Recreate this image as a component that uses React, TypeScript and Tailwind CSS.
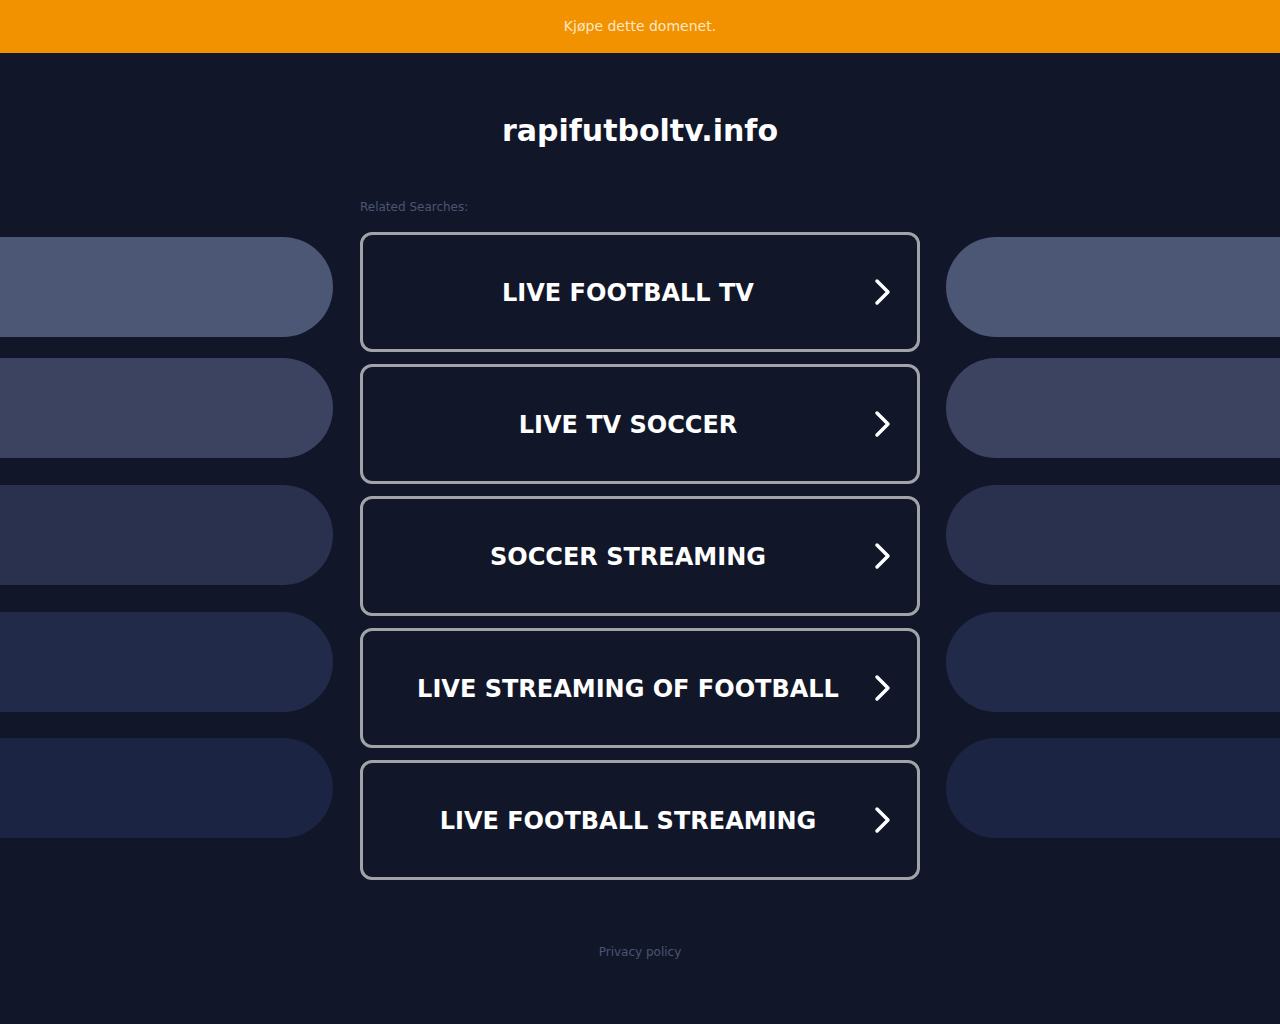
const searches = [
  "LIVE FOOTBALL TV",
  "LIVE TV SOCCER",
  "SOCCER STREAMING",
  "LIVE STREAMING OF FOOTBALL",
  "LIVE FOOTBALL STREAMING",
];

// decorative pills on both sides, lighter at the top
const pills = [
  { color: "bg-[#4c5675]", gap: "mt-0" },
  { color: "bg-[#3b4361]", gap: "mt-[21px]" },
  { color: "bg-[#29314f]", gap: "mt-[27px]" },
  { color: "bg-[#222a4a]", gap: "mt-[27px]" },
  { color: "bg-[#1c2444]", gap: "mt-[26px]" },
];

function Chevron() {
  return (
    <svg width="24" height="28" viewBox="0 0 24 28" fill="none" className="shrink-0">
      <path d="M8 3 L19 14 L8 25" stroke="white" strokeWidth="3.5" strokeLinecap="round" strokeLinejoin="round" />
    </svg>
  );
}

function Pills({ side }: { side: "left" | "right" }) {
  return (
    <div className={`flex flex-col pt-[41px] ${side === "right" ? "-ml-px" : ""}`}>
      {pills.map((p, i) => (
        <div
          key={i}
          className={`h-[100px] ${p.color} ${p.gap} ${side === "left" ? "rounded-r-full" : "rounded-l-full"}`}
        />
      ))}
    </div>
  );
}

export default function App() {
  return (
    <div className="min-h-screen bg-[#111729] font-['DejaVu_Sans',Verdana,sans-serif]">
      <div className="h-[53px] bg-[#f39200] flex items-center justify-center text-[14px] text-[#fde7c6]">
        Kjøpe dette domenet.
      </div>

      <h1 className="mt-[60px] text-center text-[30px] leading-[36px] font-bold text-white">rapifutboltv.info</h1>

      <div className="mt-[47px] grid grid-cols-[333px_560px_334px] gap-x-[27px]">
        <Pills side="left" />
        <div>
          <p className="text-[12px] leading-4 text-[#4b5572] mt-[3px] mb-[17px]">Related Searches:</p>
          <div className="flex flex-col gap-[12px]">
            {searches.map((s) => (
              <a
                key={s}
                href="#"
                className="h-[120px] flex items-center px-6 rounded-[12px] border-[3px] border-[#a1a3a8] bg-[#111729]"
              >
                <span className="flex-1 text-center text-white font-bold text-[24px] pt-[2px]">{s}</span>
                <Chevron />
              </a>
            ))}
          </div>
        </div>
        <Pills side="right" />
      </div>

      <p className="mt-[64px] text-center text-[12px] leading-4 text-[#4b5572]">Privacy policy</p>
    </div>
  );
}
